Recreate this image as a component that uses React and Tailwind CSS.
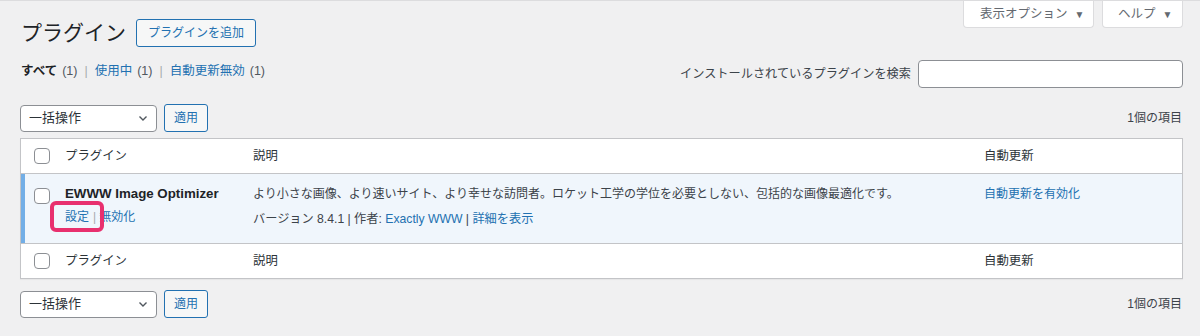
import React from "react";

const font = {
  fontFamily: '"Liberation Sans", "Noto Sans CJK JP", sans-serif',
};

function Checkbox() {
  return (
    <span className="block w-[16px] h-[16px] rounded-[4px] border border-[#8c8f94] bg-white" />
  );
}

function BulkBar({ top }) {
  return (
    <div className={`flex items-center justify-between h-[28px] ${top}`}>
      <div className="flex items-center gap-[7px]">
        <div className="w-[137px] h-[27px] bg-white border border-[#8c8f94] rounded-[4px] flex items-center justify-between pl-[8px] pr-[8px] text-[13px] text-[#2c3338]">
          <span>一括操作</span>
          <svg width="10" height="10" viewBox="0 0 10 10" fill="none">
            <path d="M1.5 3.5 L5 7 L8.5 3.5" stroke="#50575e" strokeWidth="1.4" />
          </svg>
        </div>
        <button className="h-[28px] w-[44px] bg-[#f6f7f7] border border-[#2271b1] rounded-[3px] text-[12px] text-[#2271b1]">
          適用
        </button>
      </div>
      <span className="text-[12px] text-[#3c434a] pr-[1px]">1個の項目</span>
    </div>
  );
}

function HeadRow({ border }) {
  return (
    <div className={`flex items-center h-[35px] text-[12.4px] text-[#2c3338] ${border}`}>
      <div className="w-[44px] pl-[13px]">
        <Checkbox />
      </div>
      <div className="w-[188px]">プラグイン</div>
      <div className="w-[731px]">説明</div>
      <div>自動更新</div>
    </div>
  );
}

export default function App() {
  return (
    <div
      className="min-h-[336px] bg-[#f0f0f1] border-t border-[#dcdcde] text-[#3c434a]"
      style={font}
    >
      <div className="pl-[20px] pr-[17px]">
        {/* title + screen meta */}
        <div className="flex justify-between items-start h-[47px]">
          <div className="flex items-center gap-[10px] mt-[18px]">
            <h1 className="text-[21px] leading-[28px] text-[#1d2327] pl-[1px]">
              プラグイン
            </h1>
            <button className="h-[28px] px-[11px] bg-[#f6f7f7] border border-[#2271b1] rounded-[3px] text-[12px] text-[#2271b1]">
              プラグインを追加
            </button>
          </div>
          <div className="flex gap-[8px]">
            <div className="h-[27px] w-[131px] bg-white border border-t-0 border-[#dcdcde] rounded-b-[4px] flex items-center pl-[16px] gap-[7px] text-[12.5px] text-[#646970]">
              <span>表示オプション</span>
              <span className="text-[10px]">▼</span>
            </div>
            <div className="h-[27px] w-[81px] bg-white border border-t-0 border-[#dcdcde] rounded-b-[4px] flex items-center pl-[15px] gap-[7px] text-[12.5px] text-[#646970]">
              <span>ヘルプ</span>
              <span className="text-[10px]">▼</span>
            </div>
          </div>
        </div>

        {/* filters + search */}
        <div className="flex justify-between items-start mt-[12px] h-[28px]">
          <div className="flex items-center gap-[5px] text-[12.5px] pl-[1px] mt-[2px]">
            <span className="font-bold text-[#1d2327]">すべて</span>
            <span className="text-[#50575e]">(1)</span>
            <span className="text-[#a7aaad] px-[2px]">|</span>
            <span className="text-[#2271b1]">使用中</span>
            <span className="text-[#50575e]">(1)</span>
            <span className="text-[#a7aaad] px-[2px]">|</span>
            <span className="text-[#2271b1]">自動更新無効</span>
            <span className="text-[#50575e]">(1)</span>
          </div>
          <div className="flex items-center gap-[7px]">
            <span className="text-[12.2px] text-[#3c434a]">
              インストールされているプラグインを検索
            </span>
            <div className="w-[265px] h-[28px] bg-white border border-[#8c8f94] rounded-[4px]" />
          </div>
        </div>

        <BulkBar top="mt-[16px]" />

        {/* table */}
        <div className="mt-[6px] bg-white border border-[#c3c4c7] shadow-[0_1px_1px_rgba(0,0,0,0.04)]">
          <HeadRow border="border-b border-[#c3c4c7]" />
          <div className="relative flex h-[69px] bg-[#f0f6fc] border-l-[4px] border-[#72aee6]">
            <div className="w-[40px] pl-[9px] pt-[14px]">
              <Checkbox />
            </div>
            <div className="w-[188px] pt-[11px]">
              <div className="text-[13.3px] font-bold text-[#1d2327] leading-[18px]">
                EWWW Image Optimizer
              </div>
              <div className="mt-[6px] text-[12px] leading-[16px] flex items-center gap-[4px]">
                <span className="text-[#2271b1]">設定</span>
                <span className="text-[#a7aaad]">|</span>
                <span className="text-[#2271b1] -ml-[1px]">無効化</span>
              </div>
            </div>
            <div className="w-[731px] pt-[11px] text-[12px]">
              <div className="leading-[18px] text-[#3c434a]">
                より小さな画像、より速いサイト、より幸せな訪問者。ロケット工学の学位を必要としない、包括的な画像最適化です。
              </div>
              <div className="mt-[8px] leading-[16px] text-[12.2px] text-[#3c434a]">
                バージョン 8.4.1 | 作者:{" "}
                <span className="text-[#2271b1]">Exactly WWW</span> |{" "}
                <span className="text-[#2271b1]">詳細を表示</span>
              </div>
            </div>
            <div className="pt-[11px] text-[12px] leading-[18px] text-[#2271b1]">
              自動更新を有効化
            </div>
            {/* annotation */}
            <div className="absolute left-[25px] top-[27px] w-[54px] h-[31px] border-[4px] border-[#e8306e] rounded-[6px]" />
          </div>
          <HeadRow border="border-t border-[#c3c4c7]" />
        </div>

        <BulkBar top="mt-[11px]" />
      </div>
    </div>
  );
}
